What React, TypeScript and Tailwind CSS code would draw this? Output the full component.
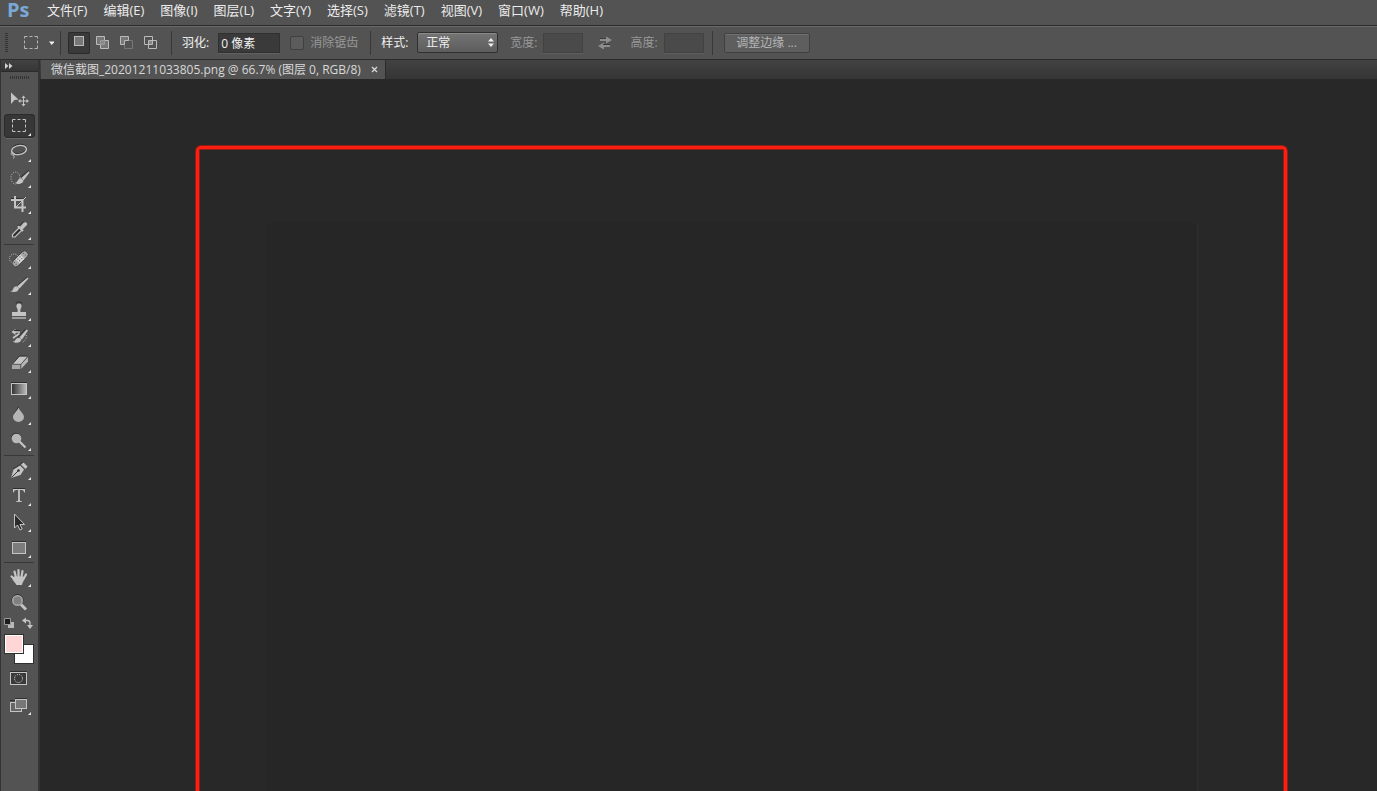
import { useState, type ReactNode } from 'react';
import { clsx } from 'clsx';

const MENUS = [
  '文件(F)',
  '编辑(E)',
  '图像(I)',
  '图层(L)',
  '文字(Y)',
  '选择(S)',
  '滤镜(T)',
  '视图(V)',
  '窗口(W)',
  '帮助(H)',
];

const LIGHT = '#c4c4c4';
const DARK = '#2e2e2e';

interface Tool {
  id: string;
  label: string;
  icon: ReactNode;
  flyout?: boolean;
}

const TOOL_GROUPS: Tool[][] = [
  [
    {
      id: 'move',
      label: '移动工具',
      flyout: false,
      icon: (
        <>
          <path d="M7 5.5 14.5 12.5 10.5 13 7 17Z" fill={LIGHT} />
          <path d="M19.5 10v8M15.5 14h8" stroke={LIGHT} />
          <path d="M19.5 8.5 21.5 11h-4ZM19.5 19.5 21.5 17h-4ZM14 14l2.5-2v4ZM25 14l-2.5-2v4Z" fill={LIGHT} />
        </>
      ),
    },
    {
      id: 'marquee',
      label: '矩形选框工具',
      icon: (
        <path
          d="M8.5 9.500V6.500H11.500M13.500 6.500H16.500M18.500 6.500H21.500V9.500M21.500 11.500V14.500M21.500 16.500V18.500H18.500M16.500 18.500H13.500M11.500 18.500H8.500V16.500M8.500 14.500V11.500"
          stroke={LIGHT}
        />
      ),
    },
    {
      id: 'lasso',
      label: '套索工具',
      icon: (
        <>
          <ellipse cx="15" cy="10" rx="7.500" ry="4.500" transform="rotate(-10 15 10)" stroke={DARK} />
          <ellipse cx="15" cy="11" rx="7.500" ry="4.500" transform="rotate(-10 15 11)" stroke={LIGHT} strokeWidth="1.400" />
          <path d="M8.500 13c-2 1-1.500 3 0 3s2.500-1.500 1-2.500M9 16c1.500 1 1.500 2 .5 3.500" stroke={LIGHT} />
        </>
      ),
    },
    {
      id: 'quick-select',
      label: '快速选择工具',
      icon: (
        <>
          <ellipse cx="11.500" cy="13" rx="4.500" ry="6" stroke={LIGHT} strokeDasharray="1 1.400" />
          <path d="M24.500 6.500 17.500 13 19.500 15.500 25.500 7.500Z" fill={LIGHT} />
          <path d="M17.500 13.500c-2-.5-3.500 1-4 2.500-.5 1-1.500 1.500-2.500 1.500 2 2 6.500 2.500 8.500-1.500Z" fill={LIGHT} />
          <path d="M24.500 5.500 17 12" stroke={DARK} />
        </>
      ),
    },
    {
      id: 'crop',
      label: '裁剪工具',
      icon: (
        <>
          <path d="M7 7.500h11M12.500 15.500 21 6.500" stroke={DARK} />
          <path d="M11 5v11.500h11M7 9h11.500V21" stroke={LIGHT} strokeWidth="2" />
          <path d="M12 16 22 6" stroke={LIGHT} />
        </>
      ),
    },
    {
      id: 'eyedropper',
      label: '吸管工具',
      icon: (
        <>
          <path d="M15 11 8.500 17.500V20H11L17.500 13.500" fill={DARK} stroke={LIGHT} strokeWidth="1.200" />
          <path d="M14 9 19 14" stroke={LIGHT} strokeWidth="2.200" />
          <path d="M16 10 19.500 6c1-1 2.500-1 3.200-.2s.5 2-.3 2.800L18.500 12.500Z" fill={LIGHT} />
          <path d="M13.500 8 15.500 8.500 19.500 4.500" stroke={DARK} strokeWidth=".8" />
        </>
      ),
    },
  ],
  [
    {
      id: 'heal',
      label: '污点修复画笔工具',
      icon: (
        <>
          <circle cx="10" cy="12.500" r="4.500" stroke={LIGHT} strokeDasharray="1 1.200" />
          <g transform="rotate(-45 16 13)">
            <rect x="6.500" y="9.500" width="19.500" height="7" rx="3.500" fill="#a8a8a8" stroke={DARK} strokeWidth=".7" />
            <rect x="12.500" y="10" width="7" height="6" fill="#d4d4d4" />
            <path d="M14 11.500h1M17 11.500h1M14 14h1M17 14h1M9 11.500h1M9 14h1M22 11.500h1M22 14h1" stroke="#555" />
          </g>
        </>
      ),
    },
    {
      id: 'brush',
      label: '画笔工具',
      icon: (
        <>
          <path d="M23 5 13.500 13.500" stroke={DARK} />
          <path d="M23.500 5.500 24.500 6.500 15.500 16.500 13 14.500Z" fill={LIGHT} />
          <path d="M13 14.500c-3-.5-3.500 1.500-4 3-.4 1-1.500 1.500-3 1.500 3.500 1.500 8 1.500 9-2.500Z" fill={LIGHT} />
        </>
      ),
    },
    {
      id: 'stamp',
      label: '仿制图章工具',
      icon: (
        <>
          <path d="M12 5.500c0-2 6-2 6 0" stroke={DARK} />
          <path d="M13.500 14c.5-2 0-3-.8-4.500C11 4 19 4 17.300 9.500 16.500 11 16 12 16.500 14H22v4H8v-4Z" fill={LIGHT} />
          <path d="M8 20h14" stroke={LIGHT} strokeWidth="1.300" />
        </>
      ),
    },
    {
      id: 'history',
      label: '历史记录画笔工具',
      icon: (
        <>
          <path d="M10 8h6M15.500 9.500 9 14" stroke={LIGHT} strokeWidth="1.600" />
          <path d="M7.500 8l4-3v6Z" fill={LIGHT} />
          <path d="M22.500 5.500 24 6.500 18 15.500 15.500 13.500Z" fill={LIGHT} />
          <path d="M15.500 14c-3-.5-3.500 1-4.500 2.500-.5 1-1.500 1-2.500 1 3 2 8 2 9-2Z" fill={LIGHT} />
          <path d="M22 11c1 3-.5 6-4 7.500" stroke={LIGHT} strokeDasharray="1 1.500" />
          <path d="M21.500 5 14.500 12.500M10 6.500h6" stroke={DARK} />
        </>
      ),
    },
    {
      id: 'eraser',
      label: '橡皮擦工具',
      icon: (
        <>
          <path d="M8.500 14 15.500 6.500H23.500L17 14Z" fill="#c4c4c4" />
          <path d="M8.500 14 15.500 6H23.500" stroke={DARK} strokeWidth=".8" />
          <path d="M8 14.500h8.500v4.500H8Z" fill="#a6a6a6" />
          <path d="M17 14.500 24 7v4.500L17 19Z" fill="#b5b5b5" />
          <path d="M8.500 14.300h8.300L23.500 7M16.800 14.300V19" stroke="#555" strokeWidth=".8" />
        </>
      ),
    },
    {
      id: 'gradient',
      label: '渐变工具',
      icon: (
        <>
          <defs>
            <linearGradient id="toolGradient">
              <stop offset="0" stopColor="#303030" />
              <stop offset="1" stopColor="#bdbdbd" />
            </linearGradient>
          </defs>
          <path d="M7 6.500h16" stroke={DARK} />
          <rect x="7.500" y="7.500" width="15" height="11" fill="url(#toolGradient)" stroke={LIGHT} />
        </>
      ),
    },
    {
      id: 'blur',
      label: '模糊工具',
      icon: (
        <>
          <path d="M14.500 4.500C14 8 9.500 10.500 9.500 15" stroke={DARK} />
          <path d="M14.500 5.500c1 3.500 5.500 6 5.500 9.500a5.500 5 0 0 1-11 0c0-3.500 4.500-6 5.500-9.500Z" fill="#b5b5b5" />
        </>
      ),
    },
    {
      id: 'dodge',
      label: '减淡工具',
      icon: (
        <>
          <path d="M15 13 21.500 19.500" stroke={LIGHT} strokeWidth="2.200" />
          <path d="M7.500 9A4.800 4.800 0 0 1 16.500 8" stroke={DARK} />
          <circle cx="12.500" cy="10.500" r="4.800" fill="#b8b8b8" />
        </>
      ),
    },
  ],
  [
    {
      id: 'pen',
      label: '钢笔工具',
      icon: (
        <>
          <path d="M7 21 9.500 12.500 16 8.500 20 12.500 16.500 18Z" fill={LIGHT} />
          <path d="M17 7.500 19.500 5.500 23.500 9.500 21.500 12Z" fill={LIGHT} />
          <path d="M7.500 20.500 14 14" stroke="#333" />
          <circle cx="14.500" cy="13.500" r="1.300" fill="#333" />
          <path d="M9 12 16 7.500 19 5" stroke={DARK} strokeWidth=".8" />
        </>
      ),
    },
    {
      id: 'type',
      label: '横排文字工具',
      icon: (
        <>
          <path d="M9 5.500h12" stroke={DARK} />
          <path
            d="M9 6h12v3.500h-.8C19.800 7.400 19 7 15.900 7V17c0 .9.500 1.100 2.100 1.300v.7h-6v-.7c1.600-.2 2.100-.4 2.100-1.300V7C11 7 10.200 7.400 9.800 9.500H9Z"
            fill={LIGHT}
          />
        </>
      ),
    },
    {
      id: 'path-select',
      label: '路径选择工具',
      icon: <path d="M10.500 5v14l3-3 2.500 5 2.200-1-2.200-4.500h4.500Z" fill="#2a2a2a" stroke={LIGHT} />,
    },
    {
      id: 'shape',
      label: '矩形工具',
      icon: (
        <>
          <path d="M8 6.500h14" stroke={DARK} />
          <rect x="8.500" y="7.500" width="13" height="11" fill="#7c7c7c" stroke={LIGHT} />
        </>
      ),
    },
  ],
  [
    {
      id: 'hand',
      label: '抓手工具',
      icon: (
        <>
          <path
            d="M10.500 15 7.500 12.500M12 13.500 10.500 7.500M14.500 13V6M17.500 13 18.500 7M19.500 15 22 10.500"
            stroke={LIGHT}
            strokeWidth="2.200"
            strokeLinecap="round"
          />
          <path d="M10 12.500h9.500l1 2c-1 3-2 4-2.500 6.500h-5.500c-1-2-3-3.500-4.500-6.500Z" fill={LIGHT} />
        </>
      ),
    },
    {
      id: 'zoom',
      label: '缩放工具',
      flyout: false,
      icon: (
        <>
          <path d="M17 14.500 22 19.500" stroke={LIGHT} strokeWidth="3" />
          <circle cx="13.500" cy="10" r="5.500" stroke={DARK} />
          <circle cx="13.500" cy="10.500" r="4.700" fill="#808080" stroke="#a8a8a8" strokeWidth="1.600" />
        </>
      ),
    },
  ],
];

interface ToolButtonProps {
  tool: Tool;
  active: boolean;
  onSelect: () => void;
}

function ToolButton({ tool, active, onSelect }: ToolButtonProps) {
  return (
    <button
      type="button"
      aria-label={tool.label}
      aria-pressed={active}
      onClick={onSelect}
      className={clsx(
        'my-px h-6 w-[31px] rounded-sm',
        active && 'bg-[#373737] shadow-[inset_0_0_0_1px_#2b2b2b,0_1px_0_#686868]',
      )}
    >
      <svg viewBox="0 1 31 24" className="block h-6 w-[31px]" fill="none">
        {tool.icon}
        {tool.flyout !== false && <path d="M27 20v3h-3Z" fill="#e8e8e8" />}
      </svg>
    </button>
  );
}

function Divider() {
  return <div className="h-6 w-px shrink-0 bg-[#383838]" />;
}

function MenuBar() {
  return (
    <header className="flex h-[25px] shrink-0 items-start pl-[7px]">
      <span className="-mt-1 w-10 text-[20px] leading-7 font-bold text-[#7ba7d7]">Ps</span>
      <nav className="flex gap-4">
        {MENUS.map((menu) => (
          <button key={menu} type="button" className="text-[13px] leading-5 whitespace-nowrap text-[#ececec]">
            {menu}
          </button>
        ))}
      </nav>
    </header>
  );
}

const SELECTION_MODES = [
  {
    id: 'new',
    label: '新选区',
    icon: <rect x="6.500" y="5.500" width="9" height="9" fill="#777" stroke="#bbb" />,
  },
  {
    id: 'add',
    label: '添加到选区',
    icon: (
      <>
        <path d="M4.500 5.500h8v4h4v8h-8v-4h-4Z" fill="#777" stroke="#bbb" />
        <path d="M8.500 13.500v-4h4v4Z" fill="#8a8a8a" stroke="#999" />
      </>
    ),
  },
  {
    id: 'subtract',
    label: '从选区减去',
    icon: (
      <>
        <path d="M8.500 9.500h8v8h-8Z" stroke="#777" />
        <path d="M4.500 5.500h8v4h-4v4h-4Z" fill="#777" stroke="#bbb" />
      </>
    ),
  },
  {
    id: 'intersect',
    label: '与选区交叉',
    icon: (
      <>
        <path d="M4.500 5.500h8v8h-8ZM8.500 9.500h8v8h-8Z" stroke="#bbb" />
        <path d="M9 10h3v3H9Z" fill="#888" />
      </>
    ),
  },
];

function OptionsBar() {
  const [mode, setMode] = useState('new');

  return (
    <div className="flex h-[35px] shrink-0 items-center border-t border-b border-t-[#2b2b2b] border-b-[#2b2b2b] pl-[5px] text-[12px] leading-4 whitespace-nowrap text-[#f0f0f0] shadow-[inset_0_1px_0_#6a6a6a]">
      <div className="h-5 w-[3px] bg-[repeating-linear-gradient(#333_0_1px,transparent_1px_2px)]" />
      <button type="button" aria-label="工具预设" className="ml-4">
        <svg viewBox="0 1 30 16" className="block h-4 w-[30px]" fill="none">
          <path
            d="M.5 4.500v-2h3M5.500 2.500h3M10.500 2.500h3v2M13.500 6.500v3M13.500 11.500v3h-3M8.500 14.500h-3M3.500 14.500h-3v-3M.5 9.500v-3"
            stroke="#b5b5b5"
          />
          <path d="M25 7.500h5.500l-2.750 3.500Z" fill="#f0f0f0" />
        </svg>
      </button>
      <div className="ml-1.5">
        <Divider />
      </div>
      <div className="ml-[7px] flex gap-0.5">
        {SELECTION_MODES.map((item) => (
          <button
            key={item.id}
            type="button"
            aria-label={item.label}
            aria-pressed={mode === item.id}
            onClick={() => setMode(item.id)}
            className={clsx(
              'h-[22px] w-[22px] rounded-xs',
              mode === item.id && 'bg-[#3a3a3a] shadow-[inset_0_0_0_1px_#2b2b2b]',
            )}
          >
            <svg viewBox="0 1 22 22" className="block size-[22px]" fill="none">
              {item.icon}
            </svg>
          </button>
        ))}
      </div>
      <div className="ml-[9px]">
        <Divider />
      </div>
      <label htmlFor="feather" className="ml-2.5">
        羽化:
      </label>
      <input
        id="feather"
        defaultValue="0 像素"
        className="ml-[9px] h-5 w-[62px] border border-[#303030] bg-[#3a3a3a] px-0.5 shadow-[0_1px_0_#626262] outline-none"
      />
      <input
        id="antialias"
        type="checkbox"
        disabled
        className="ml-2.5 size-3.5 appearance-none rounded-xs border border-[#404040] bg-[#5c5c5c]"
      />
      <label htmlFor="antialias" className="ml-1.5 text-[#989898]">
        消除锯齿
      </label>
      <div className="ml-3">
        <Divider />
      </div>
      <label htmlFor="style" className="ml-2.5">
        样式:
      </label>
      <div className="relative ml-[9px]">
        <select
          id="style"
          className="block h-[21px] w-[81px] appearance-none rounded-xs border border-[#303030] bg-linear-to-b from-[#747474] to-[#5d5d5d] pl-2 shadow-[inset_0_1px_0_#8a8a8a] outline-none"
        >
          <option>正常</option>
        </select>
        <svg viewBox="0 0 6 9" className="pointer-events-none absolute top-1.5 right-1 h-[9px] w-1.5" fill="#f0f0f0">
          <path d="M3 0 6 3.500H0ZM3 9 6 5.500H0Z" />
        </svg>
      </div>
      <label htmlFor="width" className="ml-3 text-[#989898]">
        宽度:
      </label>
      <input id="width" disabled className="ml-1.5 h-5 w-10 border border-[#424242] bg-[#4a4a4a] shadow-[0_1px_0_#5e5e5e]" />
      <button type="button" aria-label="高度和宽度互换" disabled className="ml-[15px]">
        <svg viewBox="0 0 14 14" className="block size-3.5">
          <path d="M2 3h6V.5L14 4 8 7.500V5H2ZM12 9H6V6.500L0 10l6 3.500V11h6Z" fill="#8e8e8e" />
          <path d="M2 2.500h6M5 8.500h7" stroke="#3c3c3c" />
        </svg>
      </button>
      <label htmlFor="height" className="ml-[18px] text-[#989898]">
        高度:
      </label>
      <input id="height" disabled className="ml-1.5 h-5 w-10 border border-[#424242] bg-[#4a4a4a] shadow-[0_1px_0_#5e5e5e]" />
      <div className="ml-2">
        <Divider />
      </div>
      <button
        type="button"
        disabled
        className="ml-[11px] h-5 w-[86px] rounded-xs border border-[#404040] bg-[#5e5e5e] leading-4 text-[#b5b5b5] shadow-[inset_0_1px_0_#707070]"
      >
        调整边缘 ...
      </button>
    </div>
  );
}

function ColorControls() {
  return (
    <div className="flex w-[31px] flex-col">
      <div className="flex h-[18px] items-start justify-between pt-px">
        <button type="button" aria-label="默认前景色和背景色">
          <svg viewBox="0 0 11 12" className="block h-3 w-[11px]">
            <path d="M4 5h6v6H4Z" fill="#b8b8b8" />
            <path d="M.5 1.500h6v6h-6Z" fill="#1c1c1c" stroke="#9a9a9a" />
          </svg>
        </button>
        <button type="button" aria-label="切换前景色和背景色" className="mr-0.5">
          <svg viewBox="0 0 11 12" className="block h-3 w-[11px]" fill="none">
            <path d="M3 3.500h2.500Q8 3.500 8 6v3" stroke={LIGHT} strokeWidth="1.300" />
            <path d="M0 3.500 4 .5v6ZM8 12 5 8h6Z" fill={LIGHT} />
          </svg>
        </button>
      </div>
      <div className="relative h-[30px]">
        <button
          type="button"
          aria-label="背景色"
          className="absolute top-2.5 left-2.5 size-5 border border-[#303030] bg-white"
        />
        <button
          type="button"
          aria-label="前景色"
          className="absolute top-0 left-0 size-5 border border-[#303030] bg-[#ffd6d6] shadow-[inset_0_0_0_1px_#fff]"
        />
      </div>
      <button type="button" aria-label="以快速蒙版模式编辑" className="mt-[7px] pl-1.5">
        <svg viewBox="0 0 17 16" className="block h-4 w-[17px]" fill="none">
          <path d="M0 .5h17" stroke={DARK} />
          <rect x=".5" y="1.500" width="16" height="12" fill="#3a3a3a" stroke={LIGHT} />
          <circle cx="8.500" cy="7.500" r="4" stroke="#e0e0e0" strokeDasharray="1 1.100" />
        </svg>
      </button>
      <button type="button" aria-label="更改屏幕模式" className="mt-[11px] pl-1.5">
        <svg viewBox="0 0 25 18" className="block h-[18px] w-[25px]" fill="none">
          <path d="M0 2.500h6M5 .5h12" stroke={DARK} />
          <rect x=".5" y="4.500" width="11" height="9" fill="#666" stroke={LIGHT} />
          <rect x="5.500" y="1.500" width="11" height="9" fill="#777" stroke={LIGHT} />
          <path d="M21 14v3h-3Z" fill="#e8e8e8" />
        </svg>
      </button>
    </div>
  );
}

function Toolbar() {
  const [activeTool, setActiveTool] = useState('marquee');

  return (
    <aside className="flex w-10 shrink-0 flex-col border-r-2 border-l border-r-[#343434] border-l-[#333]">
      <button
        type="button"
        aria-label="展开面板"
        className="flex h-3 shrink-0 items-center border-b border-[#2b2b2b] bg-linear-to-b from-[#424242] to-[#363636] pl-1"
      >
        <svg viewBox="0 0 8 6" className="h-1.5 w-2" fill="#d0d0d0">
          <path d="M0 0 3.500 3 0 6ZM4 0 7.500 3 4 6Z" />
        </svg>
      </button>
      <div className="mt-1 ml-[9px] h-[3px] w-5 shrink-0 bg-[repeating-linear-gradient(90deg,#333_0_1px,transparent_1px_2px)]" />
      <div className="mt-2 flex flex-col pl-[3px]">
        {TOOL_GROUPS.map((group, index) => (
          <div key={group[0].id} className="flex flex-col">
            {index > 0 && <div className="my-px mr-1 h-px bg-[#383838]" />}
            {group.map((tool) => (
              <ToolButton
                key={tool.id}
                tool={tool}
                active={activeTool === tool.id}
                onSelect={() => setActiveTool(tool.id)}
              />
            ))}
          </div>
        ))}
        <ColorControls />
      </div>
    </aside>
  );
}

function DocumentArea() {
  return (
    <main className="flex min-w-0 flex-1 flex-col">
      <div className="flex h-[19px] shrink-0 bg-linear-to-b from-[#424242] to-[#353535] pl-px">
        <div className="flex items-center gap-2.5 border-r border-[#2b2b2b] bg-[#535353] pr-[7px] pl-2.5 text-[12px] leading-5 whitespace-nowrap text-[#d8d8d8]">
          <span>微信截图_20201211033805.png @ 66.7% (图层 0, RGB/8)</span>
          <button type="button" aria-label="关闭">
            <svg viewBox="0 0 7 7" className="block size-[7px]" stroke="#d8d8d8" strokeWidth="1.300">
              <path d="M1 1 6 6M6 1 1 6" />
            </svg>
          </button>
        </div>
      </div>
      <div className="flex flex-1 bg-[#282828] pt-[66px] pr-[89px] pl-[155px]">
        <div className="flex flex-1 rounded-t-md border-x border-t border-[#8e1f18]">
          <div className="flex flex-1 rounded-t-[5px] border-x-[3px] border-t-[3px] border-[#ff1e0f]">
            <div className="flex flex-1 rounded-t-xs border-x border-t border-[#8e1f18] pt-[73px] pr-[85px] pl-[66px]">
              <div className="flex-1 border-r border-[#2e2e2e] bg-[#262626]" />
            </div>
          </div>
        </div>
      </div>
    </main>
  );
}

export default function App() {
  return (
    <div className="flex h-screen flex-col overflow-hidden bg-[#535353] font-['Open_Sans','Noto_Sans_CJK_SC',sans-serif]">
      <MenuBar />
      <OptionsBar />
      <div className="flex min-h-0 flex-1">
        <Toolbar />
        <DocumentArea />
      </div>
    </div>
  );
}
